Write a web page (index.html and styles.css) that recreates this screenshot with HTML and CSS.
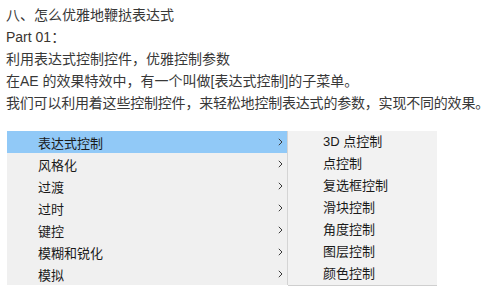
FILE: index.html
```html
<!DOCTYPE html>
<html lang="zh-CN">
<head>
<meta charset="utf-8">
<link rel="stylesheet" href="styles.css">
</head>
<body>
<div class="article">
  <p class="line">八、怎么优雅地鞭挞表达式</p>
  <p class="line part">Part 01：</p>
  <p class="line">利用表达式控制控件，优雅控制参数</p>
  <p class="line">在AE 的效果特效中，有一个叫做[表达式控制]的子菜单。</p>
  <p class="line tight">我们可以利用着这些控制控件，来轻松地控制表达式的参数，实现不同的效果。</p>
</div>
<div class="menus">
  <ul class="menu">
    <li class="item active"><span>表达式控制</span><svg class="chev" width="5" height="8" viewBox="0 0 5 8"><path d="M0.8 0.8 L4 4 L0.8 7.2" fill="none" stroke="#3a3a3a" stroke-width="1"/></svg></li>
    <li class="item"><span>风格化</span><svg class="chev" width="5" height="8" viewBox="0 0 5 8"><path d="M0.8 0.8 L4 4 L0.8 7.2" fill="none" stroke="#3a3a3a" stroke-width="1"/></svg></li>
    <li class="item"><span>过渡</span><svg class="chev" width="5" height="8" viewBox="0 0 5 8"><path d="M0.8 0.8 L4 4 L0.8 7.2" fill="none" stroke="#3a3a3a" stroke-width="1"/></svg></li>
    <li class="item"><span>过时</span><svg class="chev" width="5" height="8" viewBox="0 0 5 8"><path d="M0.8 0.8 L4 4 L0.8 7.2" fill="none" stroke="#3a3a3a" stroke-width="1"/></svg></li>
    <li class="item"><span>键控</span><svg class="chev" width="5" height="8" viewBox="0 0 5 8"><path d="M0.8 0.8 L4 4 L0.8 7.2" fill="none" stroke="#3a3a3a" stroke-width="1"/></svg></li>
    <li class="item"><span>模糊和锐化</span><svg class="chev" width="5" height="8" viewBox="0 0 5 8"><path d="M0.8 0.8 L4 4 L0.8 7.2" fill="none" stroke="#3a3a3a" stroke-width="1"/></svg></li>
    <li class="item"><span>模拟</span><svg class="chev" width="5" height="8" viewBox="0 0 5 8"><path d="M0.8 0.8 L4 4 L0.8 7.2" fill="none" stroke="#3a3a3a" stroke-width="1"/></svg></li>
  </ul>
  <ul class="submenu">
    <li class="subitem">3D 点控制</li>
    <li class="subitem">点控制</li>
    <li class="subitem">复选框控制</li>
    <li class="subitem">滑块控制</li>
    <li class="subitem">角度控制</li>
    <li class="subitem">图层控制</li>
    <li class="subitem">颜色控制</li>
  </ul>
</div>
</body>
</html>
```
FILE: styles.css
```css
html, body {
  margin: 0;
  padding: 0;
  background: #ffffff;
}
body {
  font-family: "Liberation Sans", "Noto Sans CJK SC", sans-serif;
  color: #383838;
}
.article {
  padding: 4px 0 0 6px;
}
.line {
  margin: 0;
  font-size: 14px;
  line-height: 22px;
  white-space: nowrap;
}
.tight {
  letter-spacing: -0.2px;
}
.part {
  color: #3a3530;
}
.menus {
  display: flex;
  align-items: flex-start;
  margin: 17px 0 0 7px;
}
.menu, .submenu {
  list-style: none;
  margin: 0;
  padding: 0;
}
.menu {
  width: 280px;
  background: #f0f0f0;
  border-right: 1px solid #d4d4d4;
}
.item {
  height: 22px;
  display: flex;
  align-items: center;
  justify-content: space-between;
  padding: 0 4px 0 31px;
  font-size: 13px;
  color: #1a1a1a;
}
.item.active {
  background: #91c9f7;
}
.chev {
  display: block;
}
.submenu {
  width: 149px;
  background: #f2f2f2;
  border-bottom: 1px solid #cfcfcf;
}
.subitem {
  height: 22px;
  line-height: 22px;
  padding-left: 35px;
  font-size: 13px;
  color: #1a1a1a;
}
```
